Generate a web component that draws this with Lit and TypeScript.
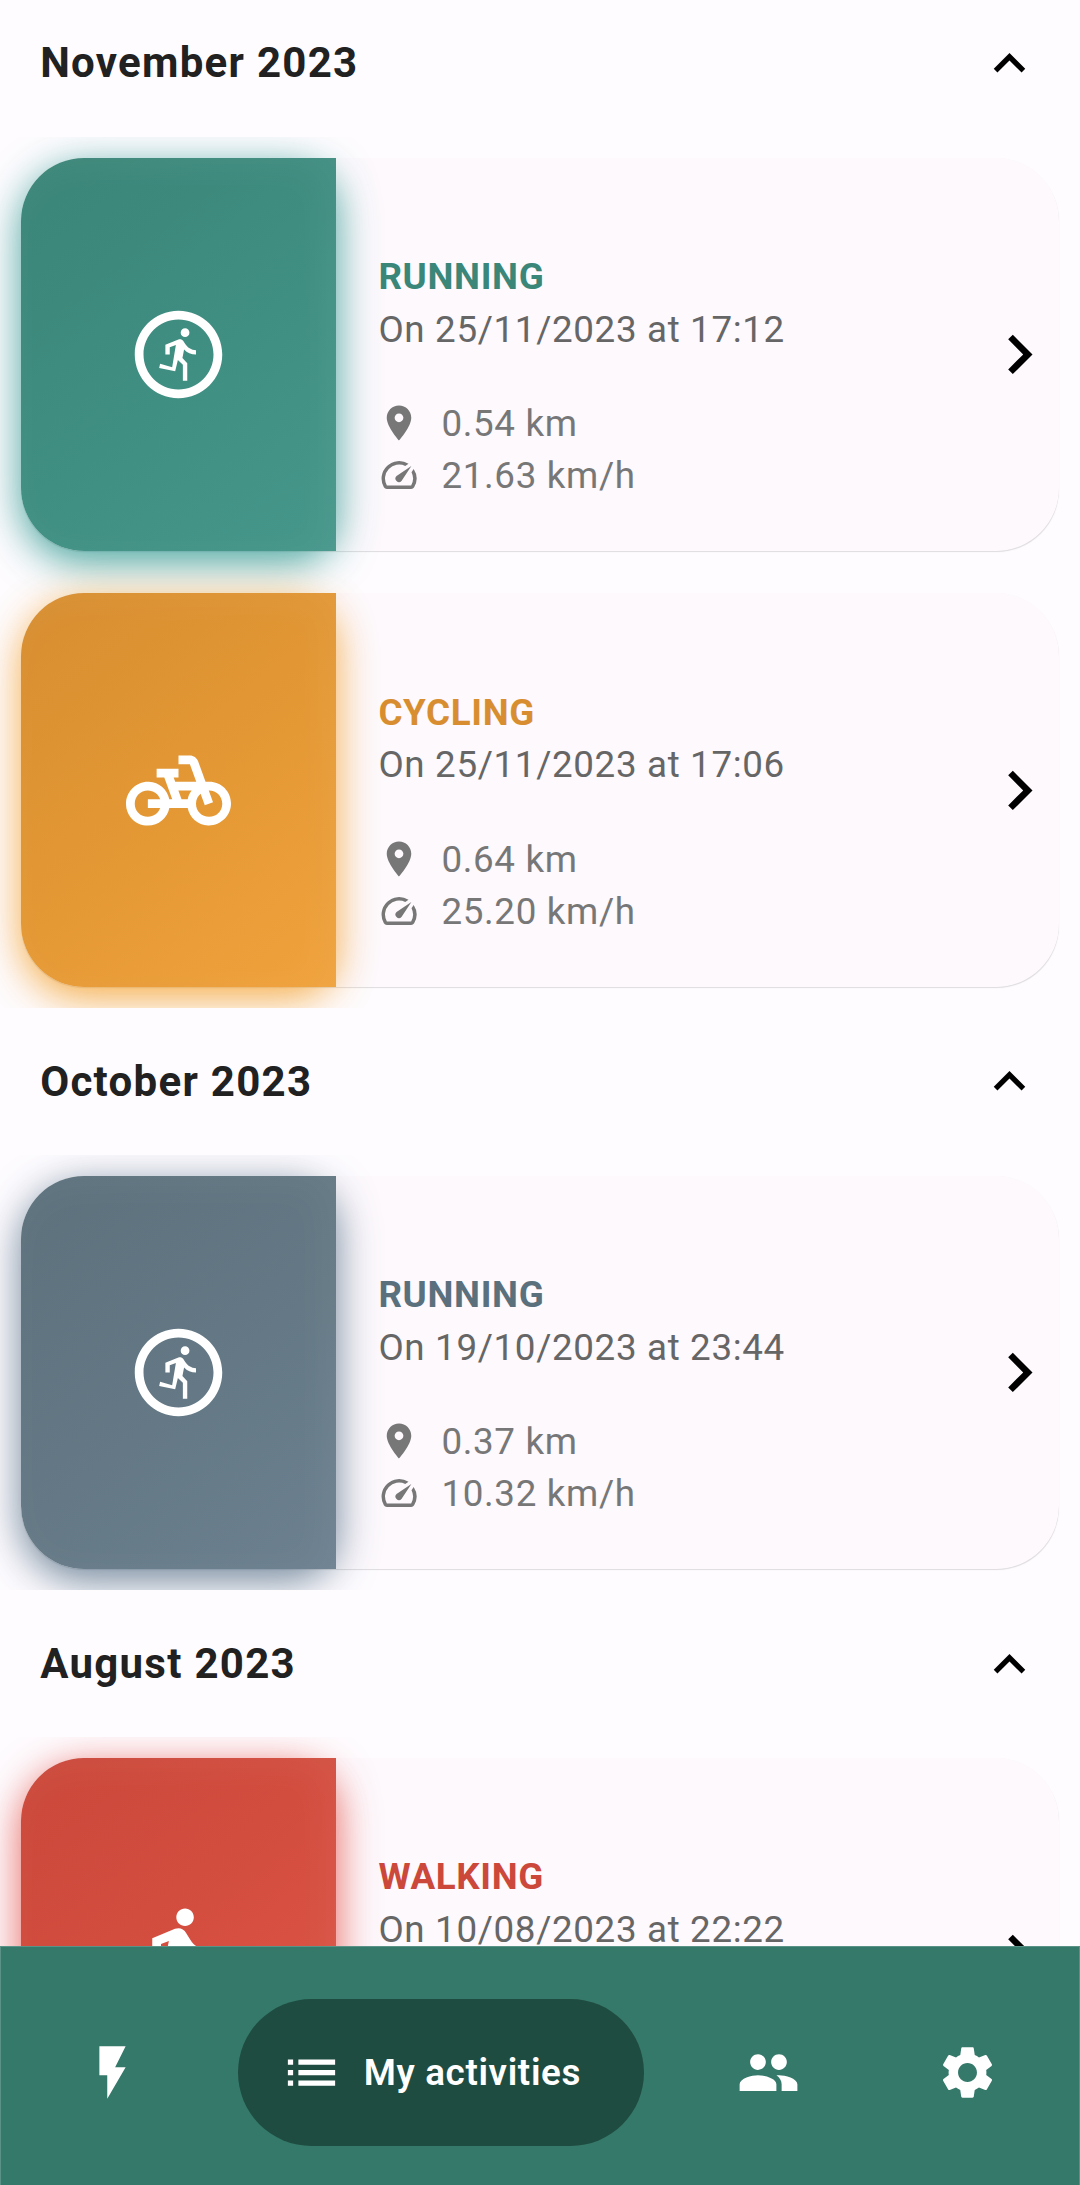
import { LitElement, html, css, svg } from "lit";
import { customElement, property } from "lit/decorators.js";

const ICONS: Record<string, string> = {
  run: "M12 2C6.48 2 2 6.48 2 12s4.48 10 10 10 10-4.48 10-10S17.52 2 12 2zm0 18c-4.41 0-8-3.59-8-8s3.59-8 8-8 8 3.59 8 8-3.59 8-8 8zM13.5 6a1 1 0 1 0 0 2 1 1 0 0 0 0-2zM16 12v-1c-1.1 0-1.95-.6-2.5-1.45l-.4-.62c-.25-.38-.72-.53-1.12-.37L9 9.75V12h1v-1.65l1.4-.5-.85 5.05-2.75-.8-.22.98 3.66.72.62-2.55L13 14.35V18h1v-4l-1.1-1.2.38-1.95C13.95 11.6 14.9 12 16 12z",
  bike: "M18.18 10l-1.7-4.68C16.19 4.53 15.44 4 14.6 4H12v2h2.6l1.46 4h-4.81l-.36-1H12V7H7v2h1.75l1.82 5H9.9c-.44-2.23-2.31-3.88-4.65-3.99C2.45 9.87 0 12.2 0 15c0 2.8 2.2 5 5 5 2.46 0 4.45-1.69 4.9-4h4.2c.44 2.23 2.31 3.88 4.65 3.99 2.8.13 5.25-2.19 5.25-5 0-2.8-2.2-5-5-5h-.82zM7.82 16c-.4 1.17-1.49 2-2.82 2-1.68 0-3-1.32-3-3s1.32-3 3-3c1.33 0 2.42.83 2.82 2H5v2h2.82zm6.28-2h-1.4l-.73-2H15c-.44.58-.76 1.25-.9 2zm4.9 4c-1.68 0-3-1.32-3-3 0-.93.41-1.73 1.05-2.28l.96 2.64 1.88-.68-.97-2.67c.03 0 .06-.01.08-.01 1.68 0 3 1.32 3 3s-1.32 3-3 3z",
  walk: "M13.5 5.5c1.1 0 2-.9 2-2s-.9-2-2-2-2 .9-2 2 .9 2 2 2zM9.8 8.9L7 23h2.1l1.8-8 2.1 2v6h2v-7.5l-2.1-2 .6-3C14.8 12 16.8 13 19 13v-2c-1.9 0-3.5-1-4.3-2.4l-1-1.6c-.4-.6-1-1-1.7-1-.3 0-.5.1-.8.1L6 8.3V13h2V9.6l1.8-.7",
  place: "M12 2C8.13 2 5 5.13 5 9c0 5.25 7 13 7 13s7-7.75 7-13c0-3.87-3.13-7-7-7zm0 9.5c-1.38 0-2.5-1.12-2.5-2.5s1.12-2.5 2.5-2.5 2.5 1.12 2.5 2.5-1.12 2.5-2.5 2.5z",
  speed: "M20.38 8.57l-1.23 1.85a8 8 0 0 1-.22 7.58H5.07A8 8 0 0 1 15.58 6.85l1.85-1.23A10 10 0 0 0 3.35 19a2 2 0 0 0 1.72 1h13.85a2 2 0 0 0 1.74-1 10 10 0 0 0-.27-10.44zm-9.79 6.84a2 2 0 0 0 2.83 0l5.66-8.49-8.49 5.66a2 2 0 0 0 0 2.83z",
  right: "M10 6L8.59 7.41 13.17 12l-4.58 4.59L10 18l6-6z",
  up: "M12 8l-6 6 1.41 1.41L12 10.83l4.59 4.58L18 14z",
  flash: "M7 2v11h3v9l7-12h-4l4-8z",
  list: "M3 13h2v-2H3v2zm0 4h2v-2H3v2zm0-8h2V7H3v2zm4 4h14v-2H7v2zm0 4h14v-2H7v2zM7 7v2h14V7H7z",
  people: "M16 11c1.66 0 2.99-1.34 2.99-3S17.66 5 16 5c-1.66 0-3 1.34-3 3s1.34 3 3 3zm-8 0c1.66 0 2.99-1.34 2.99-3S9.66 5 8 5C6.34 5 5 6.34 5 8s1.34 3 3 3zm0 2c-2.33 0-7 1.17-7 3.5V19h14v-2.5c0-2.33-4.67-3.5-7-3.5zm8 0c-.29 0-.62.02-.97.05 1.16.84 1.97 1.97 1.97 3.45V19h6v-2.5c0-2.33-4.67-3.5-7-3.5z",
  settings: "M19.14 12.94c.04-.3.06-.61.06-.94 0-.32-.02-.64-.07-.94l2.03-1.58c.18-.14.23-.41.12-.61l-1.92-3.32c-.12-.22-.37-.29-.59-.22l-2.39.96c-.5-.38-1.03-.7-1.62-.94l-.36-2.54c-.04-.24-.24-.41-.48-.41h-3.84c-.24 0-.43.17-.47.41l-.36 2.54c-.59.24-1.13.57-1.62.94l-2.39-.96c-.22-.08-.47 0-.59.22L2.74 8.87c-.12.21-.08.47.12.61l2.03 1.58c-.05.3-.09.63-.09.94s.02.64.07.94l-2.03 1.58c-.18.14-.23.41-.12.61l1.92 3.32c.12.22.37.29.59.22l2.39-.96c.5.38 1.03.7 1.62.94l.36 2.54c.05.24.24.41.48.41h3.84c.24 0 .44-.17.47-.41l.36-2.54c.59-.24 1.13-.56 1.62-.94l2.39.96c.22.08.47 0 .59-.22l1.92-3.32c.12-.22.07-.47-.12-.61l-2.01-1.58zM12 15.6c-1.98 0-3.6-1.62-3.6-3.6s1.62-3.6 3.6-3.6 3.6 1.62 3.6 3.6-1.62 3.6-3.6 3.6z",
};

@customElement("md-icon")
class MdIcon extends LitElement {
  @property() name = "";
  static styles = css`
    :host { display: block; flex: none; width: 63px; height: 63px; }
    .glyph { display: block; width: 100%; height: 100%; fill: currentColor; }
  `;
  render() {
    return html`<svg class="glyph" viewBox="0 0 24 24">${svg`<path d=${ICONS[this.name]}></path>`}</svg>`;
  }
}

interface Activity {
  kind: string;
  icon: string;
  tone: string;
  date: string;
  distance: string;
  speed: string;
}

@customElement("activity-card")
class ActivityCard extends LitElement {
  @property({ attribute: false }) activity!: Activity;
  static styles = css`
    :host { display: block; padding: 21px; }
    .card {
      display: flex; height: 393.75px; border-radius: 63px;
      background: #fdf9fd;
      box-shadow: 0 1.5px 1px -0.5px rgba(0, 0, 0, 0.13), 0 0 1px rgba(0, 0, 0, 0.03);
    }
    .teal { --ink: #3a8779; --from: #3a8577; --mid: #408f83; --to: #46978b; --glow: 38, 148, 138; }
    .amber { --ink: #d88e30; --from: #d78d30; --mid: #e59935; --to: #f0a23c; --glow: 243, 158, 38; }
    .slate { --ink: #5b707d; --from: #5c717c; --mid: #647985; --to: #6c8090; --glow: 84, 110, 132; }
    .red { --ink: #cb483a; --from: #ca483a; --mid: #d64f40; --to: #de5849; --glow: 226, 70, 58; }
    .swatch {
      display: flex; width: 315px; flex: none; color: #fff;
      border-radius: 63px 0 0 63px;
      position: relative;
    }
    .halo {
      position: absolute; inset: 0; border-radius: 63px 42px 42px 63px;
      box-shadow: 0 10.5px 40px rgba(var(--glow), 0.84);
    }
    .fill {
      position: relative; display: flex; align-items: center; justify-content: center;
      width: 100%; height: 100%; border-radius: inherit;
      background: linear-gradient(141.4deg, var(--from), var(--mid) 55%, var(--to));
      box-shadow: inset -10px 6px 40px rgba(255, 255, 255, 0.055);
    }
    .sport { width: 105px; height: 105px; }
    .details {
      flex: 1; display: flex; flex-direction: column;
      padding: 92px 0 0 42.4px;
      font-size: 36.75px; line-height: 52.5px; letter-spacing: 0.66px;
      color: #666;
    }
    .kind, .date, .value { padding-top: 1.4px; margin-bottom: -1.4px; }
    .kind { font-weight: 700; color: var(--ink); }
    .date { margin-bottom: 40.6px; }
    .stat { display: flex; align-items: center; gap: 21px; height: 52.5px; color: #777; }
    .mini { width: 42px; height: 42px; }
    .go { width: 78.75px; height: 78.75px; align-self: center; color: #000; }
  `;
  render() {
    const a = this.activity;
    return html`<div class="card ${a.tone}">
      <div class="swatch">
        <div class="halo"></div>
        <div class="fill"><md-icon class="sport" name=${a.icon}></md-icon></div>
      </div>
      <div class="details">
        <div class="kind">${a.kind}</div>
        <div class="date">${a.date}</div>
        <div class="stat"><md-icon class="mini" name="place"></md-icon><span class="value">${a.distance}</span></div>
        <div class="stat"><md-icon class="mini" name="speed"></md-icon><span class="value">${a.speed}</span></div>
      </div>
      <md-icon class="go" name="right"></md-icon>
    </div>`;
  }
}

const MONTHS: { title: string; items: Activity[] }[] = [
  { title: "November 2023", items: [
    { kind: "RUNNING", icon: "run", tone: "teal", date: "On 25/11/2023 at 17:12", distance: "0.54 km", speed: "21.63 km/h" },
    { kind: "CYCLING", icon: "bike", tone: "amber", date: "On 25/11/2023 at 17:06", distance: "0.64 km", speed: "25.20 km/h" },
  ] },
  { title: "October 2023", items: [
    { kind: "RUNNING", icon: "run", tone: "slate", date: "On 19/10/2023 at 23:44", distance: "0.37 km", speed: "10.32 km/h" },
  ] },
  { title: "August 2023", items: [
    { kind: "WALKING", icon: "walk", tone: "red", date: "On 10/08/2023 at 22:22", distance: "", speed: "" },
  ] },
];

@customElement("app-root")
class AppRoot extends LitElement {
  static styles = css`
    :host {
      display: flex; flex-direction: column; width: 1080px; height: 2185px; overflow: hidden;
      background: #fefcff; font-family: Roboto, "Liberation Sans", sans-serif;
    }
    .feed { flex: 1; min-height: 0; overflow: hidden; }
    .scroll { margin-top: -9.9px; }
    .month {
      display: flex; align-items: center; justify-content: space-between;
      height: 146.5px; padding: 1px 39.4px 0 40.2px; box-sizing: border-box;
      font-size: 42px; font-weight: 700; letter-spacing: 1.28px; color: #212121;
    }
    .month:first-child { padding-top: 0; padding-bottom: 0.4px; }
    .title { padding-bottom: 1.6px; }
    .chevron { color: #000; }
    .entries { overflow: hidden; }
    .nav {
      flex: none; display: flex; align-items: center; justify-content: space-between;
      height: 239px; padding: 13px 38.4px 0; box-sizing: border-box;
      background: #35796b; color: #fff;
      border: 1px solid #5b9287; border-bottom: 0;
    }
    .tab { display: flex; align-items: center; height: 147px; padding: 0 42px; }
    .active { gap: 21px; padding-right: 63px; border-radius: 74px; background: #1f4c41; }
    .label { font-size: 36.75px; font-weight: 600; letter-spacing: 0.66px; }
  `;
  render() {
    return html`
      <div class="feed"><div class="scroll">
        ${MONTHS.map((m) => html`
          <div class="month"><span class="title">${m.title}</span><md-icon class="chevron" name="up"></md-icon></div>
          <div class="entries">${m.items.map((a) => html`<activity-card .activity=${a}></activity-card>`)}</div>`)}
      </div></div>
      <div class="nav">
        <div class="tab"><md-icon name="flash"></md-icon></div>
        <div class="tab active"><md-icon name="list"></md-icon><span class="label">My activities</span></div>
        <div class="tab"><md-icon name="people"></md-icon></div>
        <div class="tab"><md-icon name="settings"></md-icon></div>
      </div>`;
  }
}
